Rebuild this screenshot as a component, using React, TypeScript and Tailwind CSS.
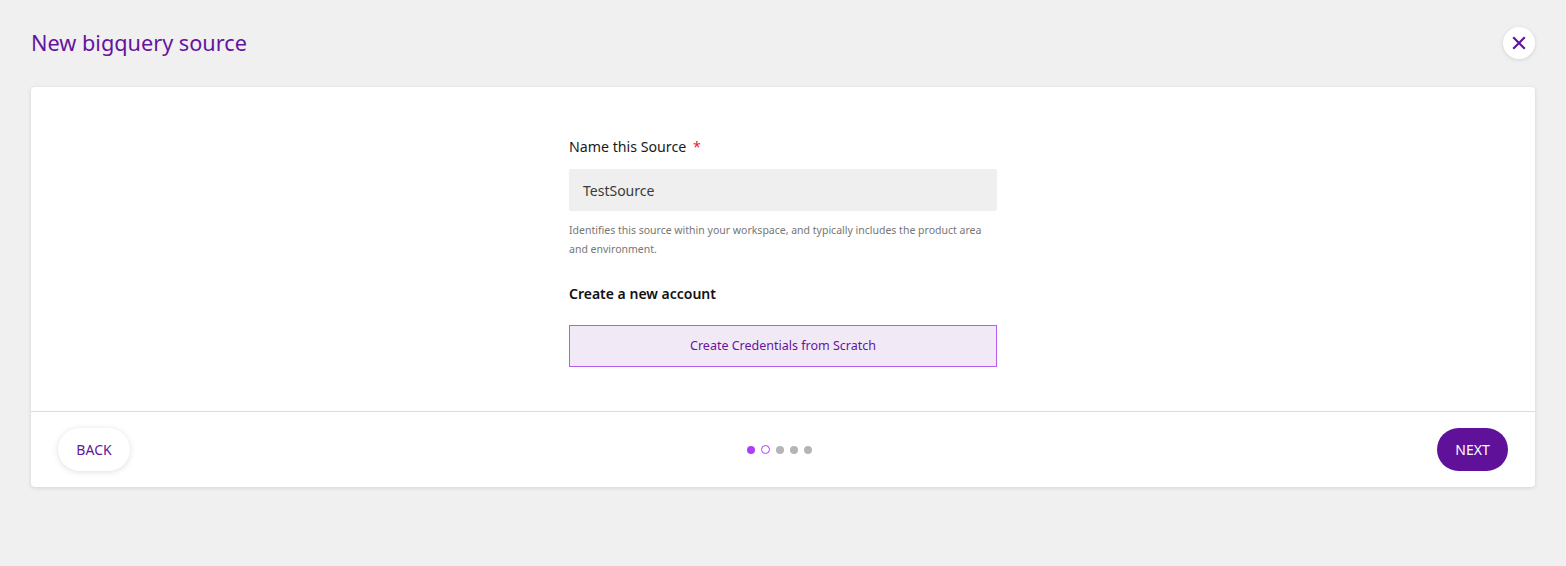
import React from "react";

export default function App() {
  const font = { fontFamily: '"Noto Sans", "Open Sans", sans-serif' };
  return (
    <div className="w-[1566px] h-[566px] bg-[#f0f0f0]" style={font}>
      <div className="flex items-center justify-between h-[87px] pl-[31px] pr-[31px] pb-[1px]">
        <h1 className="text-[21.7px] leading-[28px] text-[#6414a0]">New bigquery source</h1>
        <button className="w-[32px] h-[32px] rounded-full bg-white shadow-[0_1px_4px_rgba(0,0,0,0.12)] flex items-center justify-center mb-[1px]">
          <svg width="14" height="14" viewBox="0 0 14 14">
            <path d="M2 2 L12 12 M12 2 L2 12" stroke="#6414a0" strokeWidth="2.2" strokeLinecap="square" />
          </svg>
        </button>
      </div>
      <div className="mx-[31px] bg-white rounded-[4px] shadow-[0_1px_4px_rgba(0,0,0,0.12)]">
        <div className="flex justify-center pt-[50px] pb-[44px] border-b border-[#dcdcdc]">
          <div className="w-[428px] flex flex-col">
            <label className="text-[14.2px] leading-[20px] text-[#1a1a1a]">
              Name this Source <span className="text-[#e5202a] ml-[3px]">*</span>
            </label>
            <div className="mt-[12px] h-[42px] bg-[#efefef] rounded-[2px] flex items-center px-[14px] text-[14px] text-[#3a3a3a]">
              TestSource
            </div>
            <p className="mt-[10px] text-[10.5px] leading-[18.5px] text-[#767676]">
              Identifies this source within your workspace, and typically includes the product area and environment.
            </p>
            <h2 className="mt-[26px] text-[14px] leading-[20px] font-semibold text-[#111]">Create a new account</h2>
            <button className="mt-[21px] h-[42px] border border-[#b25cf0] bg-[#f2e9f6] text-[12.5px] text-[#6414a0] flex items-center justify-center">
              Create Credentials from Scratch
            </button>
          </div>
        </div>
        <div className="h-[75px] flex items-center justify-between px-[27px]">
          <button className="w-[72px] h-[43px] rounded-full bg-white shadow-[0_1px_6px_rgba(0,0,0,0.13)] text-[14px] text-[#6414a0]">
            BACK
          </button>
          <div className="flex items-center gap-[6px] mr-[8px]">
            <span className="w-[8px] h-[8px] rounded-full bg-[#ad3ff5]" />
            <span className="w-[9px] h-[9px] rounded-full border-[1.5px] border-[#ad3ff5]" />
            <span className="w-[8px] h-[8px] rounded-full bg-[#b5b5b5]" />
            <span className="w-[8px] h-[8px] rounded-full bg-[#b5b5b5]" />
            <span className="w-[8px] h-[8px] rounded-full bg-[#b5b5b5]" />
          </div>
          <button className="w-[71px] h-[43px] rounded-full bg-[#5f1199] text-[14px] text-white">
            NEXT
          </button>
        </div>
      </div>
    </div>
  );
}
